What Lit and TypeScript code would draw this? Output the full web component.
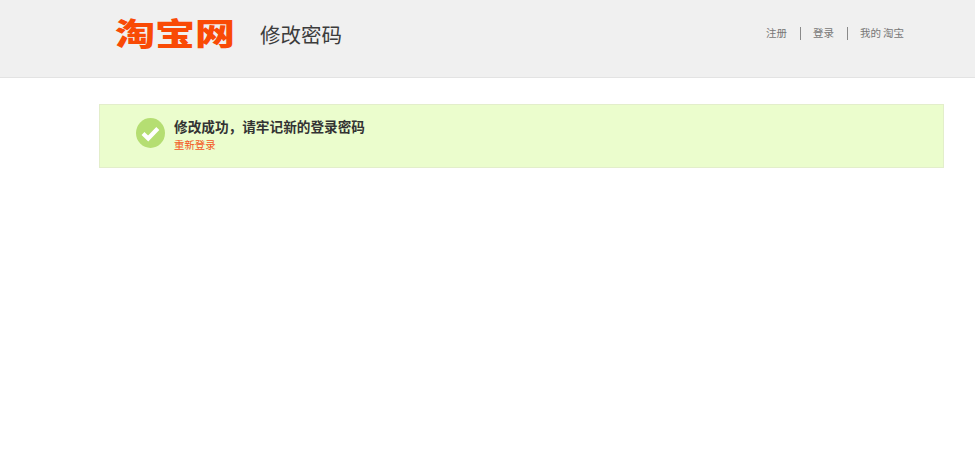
import { LitElement, css, html } from "lit";
import { customElement } from "lit/decorators.js";

@customElement("app-root")
export class AppRoot extends LitElement {
  static styles = css`
    :host {
      display: block;
      min-height: 454px;
      background: #fff;
      font-family: "Liberation Sans", "Noto Sans CJK SC", sans-serif;
    }
    .header {
      display: flex;
      align-items: flex-start;
      height: 77px;
      background: #f0f0f0;
      border-bottom: 1px solid #e3e3e3;
      padding-left: 115px;
      padding-right: 71px;
    }
    .logo {
      margin-top: 12px;
      font-size: 40px;
      line-height: 44px;
      font-weight: 900;
      color: #f94a05;
      white-space: nowrap;
      transform: scaleY(0.76);
      transform-origin: center;
    }
    .title {
      margin-left: 25px;
      margin-top: 21px;
      font-size: 20.5px;
      line-height: 30px;
      color: #3c3c3c;
    }
    .nav {
      display: flex;
      align-items: center;
      margin-left: auto;
      margin-top: 27px;
      font-size: 10.5px;
      line-height: 13px;
      word-spacing: -1px;
      color: #777;
    }
    .nav a + a {
      margin-left: 13px;
      padding-left: 12px;
      border-left: 1px solid #8a8a8a;
    }
    .msg {
      display: flex;
      align-items: flex-start;
      box-sizing: border-box;
      height: 64px;
      margin: 26px 31px 0 99px;
      padding: 13px 0 0 36px;
      background: #ebfdcd;
      border: 1px solid #e3eecb;
    }
    .icon {
      flex: none;
      width: 29px;
      height: 30px;
      margin-right: 9px;
    }
    .text {
      display: flex;
      flex-direction: column;
      padding-top: 1px;
    }
    .text b {
      font-size: 13.65px;
      line-height: 18px;
      font-weight: 700;
      color: #333;
    }
    .text a {
      margin-top: 2px;
      font-size: 10.4px;
      line-height: 14px;
      color: #f4581c;
    }
  `;

  render() {
    return html`
      <div class="header">
        <div class="logo">淘宝网</div>
        <div class="title">修改密码</div>
        <div class="nav">
          <a>注册</a>
          <a>登录</a>
          <a>我的 淘宝</a>
        </div>
      </div>
      <div class="msg">
        <svg class="icon" viewBox="0 0 29 30">
          <ellipse cx="14.5" cy="15" rx="14.5" ry="15" fill="#b5de72" />
          <path
            d="M7 15.5l5.2 5 9.6-10"
            fill="none"
            stroke="#fff"
            stroke-width="4.2"
          />
        </svg>
        <div class="text">
          <b>修改成功，请牢记新的登录密码</b>
          <a>重新登录</a>
        </div>
      </div>
    `;
  }
}
